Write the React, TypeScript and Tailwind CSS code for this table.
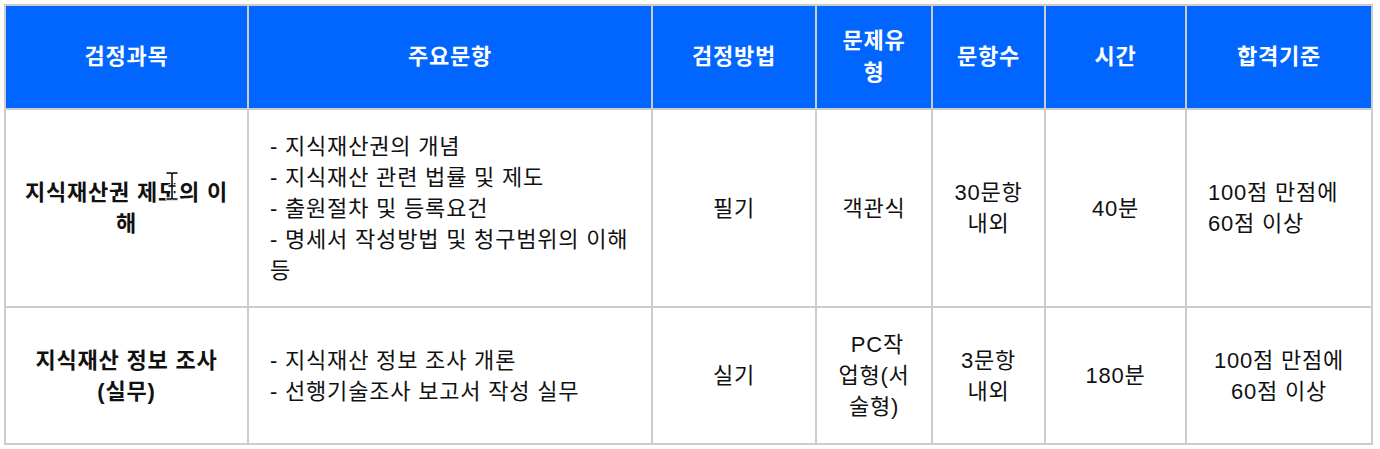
import React from "react";

const font = { fontFamily: '"Liberation Sans", "Noto Sans CJK KR", sans-serif' };

function Cell({
  children,
  className = "",
}: {
  children: React.ReactNode;
  className?: string;
}) {
  return (
    <div className={`flex items-center bg-white text-[22px] leading-[31px] tracking-[0.8px] text-[#111111] ${className}`}>
      <div>{children}</div>
    </div>
  );
}

function Head({ children }: { children: React.ReactNode }) {
  return (
    <div className="flex items-center justify-center bg-[#0066ff] text-center text-[22px] font-bold leading-[32px] tracking-[0.8px] text-white">
      <div>{children}</div>
    </div>
  );
}

function Cursor() {
  return (
    <svg
      className="pointer-events-none absolute left-[164px] top-[170px]"
      width="16"
      height="32"
      viewBox="0 0 16 32"
    >
      <path
        d="M3 3 H7 L8 4 L9 3 H13 M8 4 V28 M3 29 H7 L8 28 L9 29 H13 M5 16 H11"
        fill="none"
        stroke="#ffffff"
        strokeWidth="3.4"
        strokeLinecap="round"
        strokeLinejoin="round"
      />
      <path
        d="M3 3 H7 L8 4 L9 3 H13 M8 4 V28 M3 29 H7 L8 28 L9 29 H13 M5 16 H11"
        fill="none"
        stroke="#000000"
        strokeWidth="1.5"
        strokeLinecap="round"
        strokeLinejoin="round"
      />
    </svg>
  );
}

export default function App() {
  return (
    <div className="relative min-h-[449px] bg-white p-[4px]" style={font}>
      <div className="grid w-[1369px] grid-cols-[241px_402px_162px_114px_111px_139px_184px] grid-rows-[102px_196px_135px] gap-[2px] bg-[#cccccc] p-[2px]">
        <Head>검정과목</Head>
        <Head>주요문항</Head>
        <Head>검정방법</Head>
        <Head>
          문제유
          <br />형
        </Head>
        <Head>문항수</Head>
        <Head>시간</Head>
        <Head>합격기준</Head>

        <Cell className="justify-center whitespace-nowrap text-center font-bold">
          지식재산권 제도의 이
          <br />해
        </Cell>
        <Cell className="justify-start whitespace-nowrap pl-[21px]">
          - 지식재산권의 개념
          <br />- 지식재산 관련 법률 및 제도
          <br />- 출원절차 및 등록요건
          <br />- 명세서 작성방법 및 청구범위의 이해
          <br />등
        </Cell>
        <Cell className="justify-center text-center">필기</Cell>
        <Cell className="justify-center text-center">객관식</Cell>
        <Cell className="justify-center whitespace-nowrap text-center">
          30문항
          <br />내외
        </Cell>
        <Cell className="justify-center text-center">40분</Cell>
        <Cell className="justify-start whitespace-nowrap pl-[21px]">
          100점 만점에
          <br />
          60점 이상
        </Cell>

        <Cell className="justify-center whitespace-nowrap text-center font-bold">
          지식재산 정보 조사
          <br />
          (실무)
        </Cell>
        <Cell className="justify-start whitespace-nowrap pl-[21px]">
          - 지식재산 정보 조사 개론
          <br />- 선행기술조사 보고서 작성 실무
        </Cell>
        <Cell className="justify-center text-center">실기</Cell>
        <Cell className="justify-center whitespace-pre text-center">
          {"\u00a0PC작"}
          <br />
          업형(서
          <br />
          술형)
        </Cell>
        <Cell className="justify-center whitespace-nowrap text-center">
          3문항
          <br />내외
        </Cell>
        <Cell className="justify-center text-center">180분</Cell>
        <Cell className="justify-center whitespace-nowrap text-center">
          100점 만점에
          <br />
          60점 이상
        </Cell>
      </div>
      <Cursor />
    </div>
  );
}
